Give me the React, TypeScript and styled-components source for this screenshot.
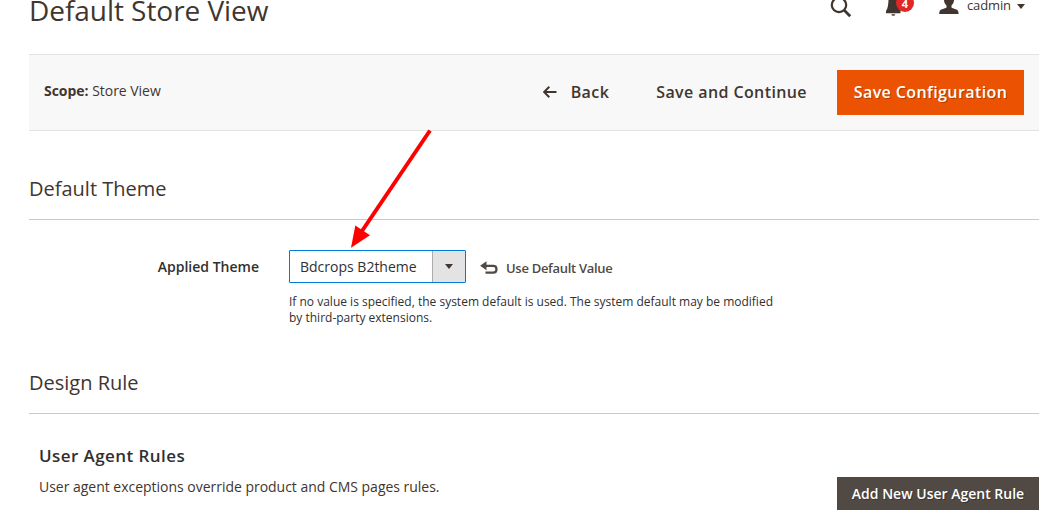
import React from "react";
import styled, { createGlobalStyle } from "styled-components";

const GlobalStyle = createGlobalStyle`
  * { box-sizing: border-box; }
  body {
    margin: 0;
    overflow: hidden;
    background: #fff;
    color: #41362f;
    font-family: "Open Sans", "Noto Sans", sans-serif;
    font-size: 14px;
    line-height: 20px;
  }
  h1, h2, h3, p { margin: 0; }
  button { font-family: inherit; border: 0; cursor: pointer; white-space: nowrap; }
  svg { display: block; flex: none; }
`;

const Page = styled.div`
  height: 527px;
  padding: 0 13px 0 29px;
  overflow: hidden;
`;

const Header = styled.header`
  display: flex;
  justify-content: space-between;
  height: 54px;
`;

const Title = styled.h1`
  margin-top: -8px;
  font-size: 28px;
  font-weight: 400;
  line-height: 36px;
  height: 36px;
  letter-spacing: -0.05px;
`;

const HeaderTools = styled.div`
  display: flex;
  align-items: flex-start;
  height: 20px;
  padding-right: 14px;
`;

const Notifications = styled.div`
  position: relative;
  margin-left: 33px;
`;

const Badge = styled.span`
  position: absolute;
  top: -6px;
  left: 11px;
  width: 18px;
  height: 18px;
  border-radius: 50%;
  background: #e22626;
  color: #fff;
  font-size: 11px;
  font-weight: 700;
  line-height: 19px;
  text-align: center;
`;

const Account = styled.div`
  display: flex;
  margin-left: 38px;
`;

const UserName = styled.span`
  margin: -5px 6px 0 8px;
  font-size: 13px;
  line-height: 20px;
  letter-spacing: -0.1px;
  color: #41362f;
`;

const ActionBar = styled.div`
  display: flex;
  align-items: center;
  justify-content: space-between;
  height: 77px;
  padding: 0 15px;
  border: solid #e3e3e3;
  border-width: 1px 0;
  background: #f8f8f8;
`;

const Scope = styled.div`
  padding-bottom: 3px;
  letter-spacing: -0.03px;
`;

const Actions = styled.div`
  display: flex;
  align-items: center;
`;

const TextButton = styled.button`
  display: flex;
  align-items: center;
  gap: 14px;
  height: 45px;
  padding: 0 0 2px;
  margin-right: 47px;
  background: none;
  color: #41362f;
  font-size: 16px;
  font-weight: 600;
  letter-spacing: 0.4px;
  &:nth-child(2) { margin-right: 30px; }
`;

const PrimaryButton = styled.button`
  width: 187px;
  height: 45px;
  padding: 0 0 2px;
  background: #eb5202;
  color: #fff;
  font-size: 16px;
  font-weight: 600;
  letter-spacing: 0.4px;
  text-shadow: 1px 1px 0 rgba(0, 0, 0, 0.25);
`;

const SectionTitle = styled.h2<{ $top: number }>`
  margin-top: ${(p) => p.$top}px;
  height: 46px;
  border-bottom: 1px solid #cac9c7;
  font-size: 20px;
  font-weight: 400;
  line-height: 30px;
`;

const Field = styled.div`
  display: flex;
  padding-top: 30px;
`;

const FieldLabel = styled.label`
  width: 230px;
  margin-right: 30px;
  font-weight: 600;
  line-height: 34px;
  text-align: right;
  color: #303030;
`;

const FieldControl = styled.div`
  width: 500px;
`;

const ControlRow = styled.div`
  display: flex;
  align-items: center;
`;

const Select = styled.div`
  display: flex;
  justify-content: space-between;
  width: 177px;
  height: 33px;
  border: 1px solid #007bdb;
  border-radius: 1px;
  color: #303030;
  line-height: 32px;
  padding-left: 10px;
`;

const SelectHandle = styled.span`
  display: flex;
  align-items: center;
  justify-content: center;
  width: 33px;
  border-left: 1px solid #adadad;
  background: #e3e3e3;
`;

const ResetButton = styled.button`
  display: flex;
  align-items: center;
  gap: 8px;
  margin: 2px 0 0 14px;
  padding: 0;
  background: none;
  color: #514943;
  font-size: 13px;
  font-weight: 600;
  letter-spacing: -0.3px;
`;

const Note = styled.p`
  margin-top: 11px;
  font-size: 12px;
  line-height: 16px;
  color: #303030;
`;

const RulesBlock = styled.div`
  display: flex;
  justify-content: space-between;
  align-items: flex-end;
  height: 96px;
  padding-left: 10px;
`;

const RulesText = styled.div`
  align-self: flex-start;
  padding-top: 31px;
`;

const RulesTitle = styled.h3`
  font-size: 17px;
  font-weight: 600;
  line-height: 22px;
  letter-spacing: 0.425px;
  color: #303030;
`;

const RulesNote = styled.p`
  margin-top: 10px;
  letter-spacing: -0.02px;
`;

const DarkButton = styled.button`
  width: 202px;
  height: 33px;
  padding: 0;
  background: #514943;
  color: #fff;
  font-size: 14px;
  font-weight: 600;
  text-shadow: 1px 1px 0 rgba(0, 0, 0, 0.3);
`;

const ArrowLayer = styled.svg`
  position: absolute;
  left: 340px;
  top: 120px;
  pointer-events: none;
`;

const SearchIcon = () => (
  <svg width="22" height="18" viewBox="0 0 22 18" fill="none" stroke="#41362f">
    <circle cx="9" cy="5" r="7.200" strokeWidth="2.200" />
    <path d="M14 10l6.200 6.200" strokeWidth="2.800" />
  </svg>
);

const BellIcon = () => (
  <svg width="16" height="16" viewBox="0 0 16 16" fill="#41362f">
    <path d="M3.500 0h9.500c.2 4 1 8 2.500 10v3.300H1V11C3 8.500 3.300 4 3.500 0zM6.300 14.200h4c-.4 1-1.100 1.500-2 1.500s-1.600-.5-2-1.500z" />
  </svg>
);

const UserIcon = () => (
  <svg width="20" height="14" viewBox="0 0 20 14" fill="#41362f">
    <path d="M5 0h10c0 2-.9 4-2.500 5.400v2.100c.6.700 2 1 4.200 1.700 2.100.7 2.900 1.700 2.900 4.800H.2c0-3.100.8-4.100 2.900-4.800C5.300 8.500 6.900 8.200 7.500 7.500V5.400C5.900 4 5 2 5 0z" />
  </svg>
);

const Caret = ({ top = 0 }: { top?: number }) => (
  <svg width="8" height={5 + top} viewBox={`0 ${-top} 8 ${5 + top}`} fill="#41362f">
    <path d="M0 0h8L4 5z" />
  </svg>
);

const BackIcon = () => (
  <svg width="14" height="12" viewBox="0 0 14 12" fill="none" stroke="#41362f" strokeWidth="2">
    <path d="M13.500 6H1M6.300.8L1.100 6l5.200 5.200" />
  </svg>
);

const UndoIcon = () => (
  <svg width="18" height="14" viewBox="0 0 18 14">
    <path d="M6.500.3v9L.1 4.800z" fill="#514943" />
    <path d="M5 4.900h8.200c2 0 3.300 1.300 3.300 3.300s-1.300 3.500-3.300 3.500H5.500" fill="none" stroke="#514943" strokeWidth="2.200" />
  </svg>
);

export default function App() {
  return (
    <Page>
      <GlobalStyle />
      <Header>
        <Title>Default Store View</Title>
        <HeaderTools>
          <SearchIcon />
          <Notifications>
            <BellIcon />
            <Badge>4</Badge>
          </Notifications>
          <Account>
            <UserIcon />
            <UserName>cadmin</UserName>
            <Caret top={4} />
          </Account>
        </HeaderTools>
      </Header>
      <ActionBar>
        <Scope>
          <b>Scope:</b> Store View
        </Scope>
        <Actions>
          <TextButton>
            <BackIcon />
            Back
          </TextButton>
          <TextButton>Save and Continue</TextButton>
          <PrimaryButton>Save Configuration</PrimaryButton>
        </Actions>
      </ActionBar>
      <SectionTitle $top={43}>Default Theme</SectionTitle>
      <Field>
        <FieldLabel>Applied Theme</FieldLabel>
        <FieldControl>
          <ControlRow>
            <Select>
              Bdcrops B2theme
              <SelectHandle>
                <Caret />
              </SelectHandle>
            </Select>
            <ResetButton>
              <UndoIcon />
              Use Default Value
            </ResetButton>
          </ControlRow>
          <Note>
            If no value is specified, the system default is used. The system default may be modified
            by third-party extensions.
          </Note>
        </FieldControl>
      </Field>
      <SectionTitle $top={42}>Design Rule</SectionTitle>
      <RulesBlock>
        <RulesText>
          <RulesTitle>User Agent Rules</RulesTitle>
          <RulesNote>User agent exceptions override product and CMS pages rules.</RulesNote>
        </RulesText>
        <DarkButton>Add New User Agent Rule</DarkButton>
      </RulesBlock>
      <ArrowLayer width="110" height="135" viewBox="0 0 110 135">
        <path d="M90 10.500L22 111" stroke="#f00" strokeWidth="4" />
        <path d="M11 127.800L15.300 105.500L30 115.200z" fill="#f00" />
      </ArrowLayer>
    </Page>
  );
}
